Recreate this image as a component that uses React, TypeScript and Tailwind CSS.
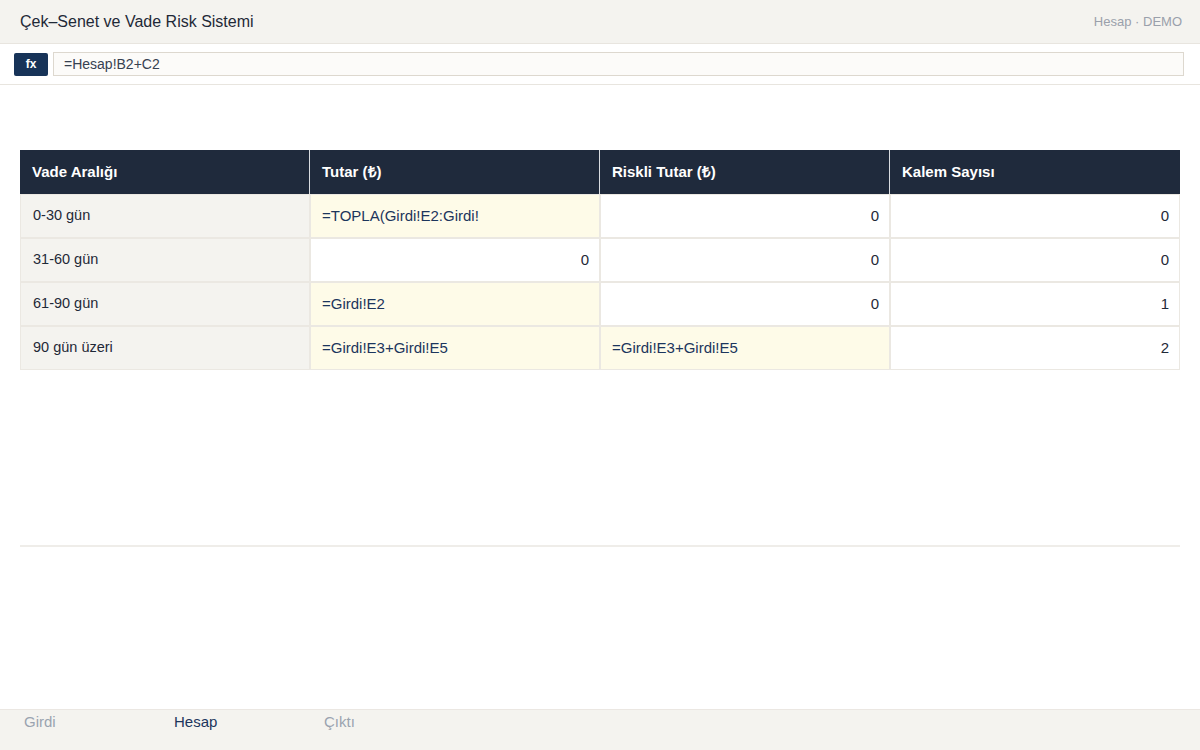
import React from "react";

const font = { fontFamily: '"Liberation Sans", Arial, Helvetica, sans-serif' };

type Cell = { v: string; f?: boolean };
const rows: { label: string; cells: Cell[] }[] = [
  { label: "0-30 gün", cells: [{ v: "=TOPLA(Girdi!E2:Girdi!", f: true }, { v: "0" }, { v: "0" }] },
  { label: "31-60 gün", cells: [{ v: "0" }, { v: "0" }, { v: "0" }] },
  { label: "61-90 gün", cells: [{ v: "=Girdi!E2", f: true }, { v: "0" }, { v: "1" }] },
  { label: "90 gün üzeri", cells: [{ v: "=Girdi!E3+Girdi!E5", f: true }, { v: "=Girdi!E3+Girdi!E5", f: true }, { v: "2" }] },
];

export default function App() {
  return (
    <div className="w-[1200px] h-[750px] bg-white flex flex-col overflow-hidden" style={font}>
      <div className="h-[44px] shrink-0 bg-[#f4f3ef] border-b border-[#e8e5df] flex items-center justify-between pl-[20px] pr-[18px]">
        <div className="text-[16px] text-[#1f2937]">Çek–Senet ve Vade Risk Sistemi</div>
        <div className="text-[13px] text-[#9aa0ab]">Hesap · DEMO</div>
      </div>
      <div className="h-[41px] shrink-0 bg-white border-b border-[#e8e5df] flex items-center pl-[14px] pr-[16px] gap-[5px]">
        <div className="w-[34px] h-[23px] rounded-[2px] bg-[#173358] text-white text-[12px] font-bold flex items-center justify-center">fx</div>
        <div className="flex-1 h-[24px] bg-[#fcfbf9] border border-[#ddd8cf] flex items-center px-[10px] text-[14px] text-[#374151]">=Hesap!B2+C2</div>
      </div>
      <div className="flex-1 px-[20px] pt-[65px]">
        <table className="w-full table-fixed border-separate border-spacing-0 text-[14.5px]">
          <thead>
            <tr className="h-[44px] bg-[#1f2a3c] text-white">
              {["Vade Aralığı", "Tutar (₺)", "Riskli Tutar (₺)", "Kalem Sayısı"].map((h, i) => (
                <th key={h} className={`text-left font-bold text-[15px] px-[12px] ${i < 3 ? "border-r border-[#d9dce1]" : ""}`}>{h}</th>
              ))}
            </tr>
          </thead>
          <tbody>
            {rows.map((r) => (
              <tr key={r.label} className="h-[44px]">
                <td className="bg-[#f4f3ef] border border-[#ebe8e2] px-[12px] text-[#1f2937]">{r.label}</td>
                {r.cells.map((c, i) =>
                  c.f ? (
                    <td key={i} className="bg-[#fefbe8] border border-[#ebe8e2] px-[11px] text-[15px] text-[#1c355c] whitespace-nowrap overflow-hidden">{c.v}</td>
                  ) : (
                    <td key={i} className="bg-white border border-[#ebe8e2] px-[10px] text-right text-[15px] text-[#1f2937]">{c.v}</td>
                  )
                )}
              </tr>
            ))}
          </tbody>
        </table>
        <div className="mt-[175px] h-[2px] bg-[#efede9]" />
      </div>
      <div className="h-[41px] shrink-0 bg-[#f4f3ef] border-t border-[#ebe7e2] flex text-[15px] pl-[24px] pt-[1px]">
        <div className="w-[150px] text-[#9aa3b0]">Girdi</div>
        <div className="w-[150px] text-[#1c355c]">Hesap</div>
        <div className="w-[150px] text-[#9aa3b0]">Çıktı</div>
      </div>
    </div>
  );
}
